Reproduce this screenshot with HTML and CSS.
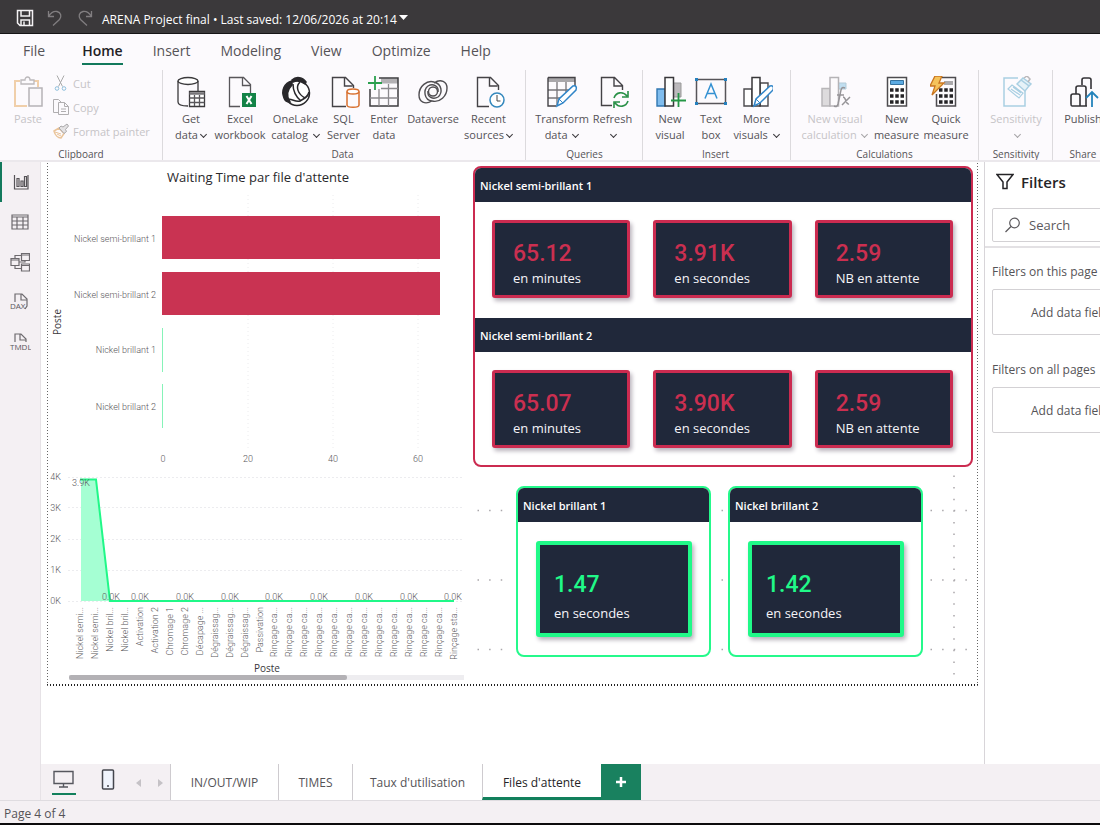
FILE: index.html
```html
<!DOCTYPE html>
<html lang="en">
<head>
<meta charset="utf-8">
<title>ARENA Project final</title>
<link rel="stylesheet" href="styles.css">
</head>
<body>
<header class="titlebar">
  <button class="tb-btn" aria-label="Save"><svg width="18" height="18" viewBox="0 0 18 18" fill="none" stroke="#f4f2f4" stroke-width="1.500"><path d="M1.500 1.500H16.500V16.500H4L1.500 14z"/><path d="M5 2v5h8.500V2M5 16.500v-5.500h8.500v5.500M8 12.500v3.500"/></svg></button>
  <button class="tb-btn" aria-label="Undo"><svg width="18" height="18" viewBox="0 0 18 18" fill="none" stroke="#817e80" stroke-width="1.300"><path d="M2.500 2v5.500H8M2.500 7.500C5 3.500 8 2 11 2.500c4 1 5 5 2.500 8L7 16.500"/></svg></button>
  <button class="tb-btn" aria-label="Redo"><svg width="18" height="18" viewBox="0 0 18 18" fill="none" stroke="#817e80" stroke-width="1.300"><path d="M15.500 2v5.500H10M15.500 7.500C13 3.500 10 2 7 2.500c-4 1-5 5-2.500 8L11 16.500"/></svg></button>
  <h1 class="doc-name">ARENA Project final • Last saved: 12/06/2026 at 20:14</h1>
  <svg class="caret" width="9" height="5" viewBox="0 0 9 5"><path d="M0 0h9L4.500 5z" fill="#fff"/></svg>
</header>

<nav class="menu">
  <a href="#file">File</a><a href="#home" class="current">Home</a><a href="#insert">Insert</a><a href="#modeling">Modeling</a><a href="#view">View</a><a href="#optimize">Optimize</a><a href="#help">Help</a>
</nav>

<section class="ribbon" aria-label="Home ribbon">
  <div class="group clipboard">
    <div class="tools">
      <button class="paste" disabled>
        <svg width="32" height="32" viewBox="0 0 32 32" fill="none"><path d="M8 5H3v25h12M22 5h4v6" stroke="#f0cfaa" stroke-width="2"/><path d="M9 8V4h4c0-4 5-4 5 0h4v4z" stroke="#bcb9bc" stroke-width="1.300"/><path d="M17 12h13v18H17z" fill="#faf8fb" stroke="#b5b3b6" stroke-width="1.500"/></svg>
        <span>Paste</span>
      </button>
      <div class="small-tools">
        <button disabled><svg width="18" height="18" viewBox="0 0 18 18" fill="none" stroke="#aaa"><path d="M5 1.500l5.500 11M12 1.500L6.500 12.500"/><circle cx="5" cy="14.500" r="1.800" stroke="#8fc0dd"/><circle cx="12" cy="14.500" r="1.800" stroke="#8fc0dd"/></svg>Cut</button>
        <button disabled><svg width="18" height="18" viewBox="0 0 18 18" fill="none" stroke="#b0aeb0"><path d="M6 14.500H1.500v-13h5l3 3M6.500 16.500v-12h6l4 4v8zM12.500 4.500v4h4M9 11h5M9 13.500h5"/></svg>Copy</button>
        <button disabled><svg width="18" height="18" viewBox="0 0 18 18" fill="none"><path d="M2 9l5-3 5 5.500L9 16c-3 0-6-3-7-7z" stroke="#eac49a" stroke-width="1.500"/><path d="M3 10l6 2M5 12l4 2" stroke="#eac49a"/><path d="M7 6l2-2 2 1 4-3 1.500 2-3 3.500 1 2-2.500 2z" fill="#e4e2e4" stroke="#aaa8aa"/></svg>Format painter</button>
      </div>
    </div>
    <h2>Clipboard</h2>
  </div>

  <div class="group data">
    <div class="tools">
      <button class="tool w42"><svg width="32" height="32" viewBox="0 0 32 32" fill="none" stroke="#3b3a3c" stroke-width="1.300"><ellipse cx="13" cy="5" rx="10" ry="3.500" fill="#fff"/><path d="M3 5v21c0 3 5 4 10 4M23 5v10"/><path d="M14.500 15.500h15v15h-15z" fill="#fff"/><path d="M14.500 17.500h15" stroke="#777579" stroke-width="2.500"/><path d="M19.500 19v11M24.500 19v11M14.500 22h15M14.500 26.500h15" stroke="#59575b"/></svg><span>Get<br>data<i class="chev"></i></span></button>
      <button class="tool w56"><svg width="32" height="32" viewBox="0 0 32 32" fill="none"><path d="M16 30.500H5.500v-29h14l7 7V17M18.500 1.500v8h8" stroke="#58565a" stroke-width="1.300"/><path d="M18 17h14v14H18z" fill="#138347"/><path d="M22.500 20l5 8M27.500 20l-5 8" stroke="#fff" stroke-width="2"/></svg><span>Excel<br>workbook</span></button>
      <button class="tool w55"><svg width="32" height="32" viewBox="0 0 32 32" fill="none" stroke="#29282b" stroke-width="1.500"><circle cx="17" cy="17" r="12.500" fill="#fff"/><path d="M12 5C4 7 1 15 4 22c1 3 3 4 6 4-4-6-3-12 2-17z" fill="#29282b"/><path d="M12 4c4-4 11-3 14 2l-1 2c-4-3-8-4-12-2z" fill="#29282b"/><path d="M13 8c0 7 2 12 8 17M20 6c-5 5-2 12 5 16"/><path d="M6 24c5-3 9 3 14 1 4-2 8-4 9-9"/></svg><span>OneLake<br>catalog <i class="chev"></i></span></button>
      <button class="tool w41"><svg width="32" height="32" viewBox="0 0 32 32" fill="none"><path d="M18 30.500H4.500v-29h13l8 8V12M16.500 1.500v8.500h8" stroke="#444246" stroke-width="1.400"/><ellipse cx="25" cy="15.500" rx="6" ry="2.500" fill="#fff" stroke="#d8702f" stroke-width="1.400"/><path d="M19 15.500V29c0 3 12 3 12 0V15.500" stroke="#d8702f" stroke-width="1.500"/></svg><span>SQL<br>Server</span></button>
      <button class="tool w40"><svg width="32" height="32" viewBox="0 0 32 32" fill="none"><path d="M13 5h17" stroke="#b3b1b4" stroke-width="5"/><path d="M11 2h19v28H2V13" stroke="#3d3c3f" stroke-width="1.500"/><path d="M2 22h28M13 12.500h17M11 13v17M20.500 8v22" stroke="#8b898d" stroke-width="1.300"/><path d="M7 0v14M0 7h14" stroke="#2ba04e" stroke-width="1.800"/></svg><span>Enter<br>data</span></button>
      <button class="tool w58"><svg width="32" height="32" viewBox="0 0 32 32" fill="none" stroke="#504e52" stroke-width="1.400"><path d="M15 25C8 29 2 26 2 19 2 10 10 4 17 6c8 2 9 11 4 15-5 3-11 0-10-6M17 7c7-5 13-1 13 5 0 8-7 15-15 13-8-1-9-11-4-15 5-3 11 0 10 6"/><circle cx="16" cy="15.500" r="4.500"/></svg><span>Dataverse</span></button>
      <button class="tool w53"><svg width="32" height="32" viewBox="0 0 32 32" fill="none"><path d="M16 30.500H4.500v-29h13l8 8V14M16.500 1.500v8.500h8" stroke="#444246" stroke-width="1.400"/><circle cx="24" cy="24" r="7" fill="#fff" stroke="#3488bd" stroke-width="1.500"/><path d="M24 19v6h3.500" stroke="#444"/></svg><span>Recent<br>sources<i class="chev"></i></span></button>
    </div>
    <h2>Data</h2>
  </div>

  <div class="group queries">
    <div class="tools">
      <button class="tool w56"><svg width="32" height="32" viewBox="0 0 32 32" fill="none"><path d="M2 4h27" stroke="#a9a7aa" stroke-width="4"/><path d="M2 14h21M2 22h15M11 6v24M20 6v12" stroke="#777579" stroke-width="1.300"/><path d="M2 1.500h27V12M10 30H2V1.500" stroke="#444246" stroke-width="1.400"/><path d="M11 30l2-7 14-13c3-1 4 1 3 4L17 27z" fill="#fff" stroke="#3185c8" stroke-width="1.500"/><path d="M13 23l4 4" stroke="#3185c8"/></svg><span>Transform<br>data <i class="chev"></i></span></button>
      <button class="tool w45"><svg width="32" height="32" viewBox="0 0 32 32" fill="none"><path d="M15 29.500H4.500v-28h13l8 8V14M17 1.500V10h8" stroke="#444246" stroke-width="1.400"/><path d="M17 22c2-6 9-7 13-2M31 15v6h-6M31 25c-2 6-9 7-13 2M17 32v-6h6" stroke="#299047" stroke-width="1.600"/></svg><span>Refresh<br><i class="chev"></i></span></button>
    </div>
    <h2>Queries</h2>
  </div>

  <div class="group insert">
    <div class="tools">
      <button class="tool w40"><svg width="32" height="32" viewBox="0 0 32 32" fill="none"><path d="M3 13h8v17H3z" fill="#80bdee" stroke="#3177b1" stroke-width="1.400"/><path d="M19 7h8v14h-8z" fill="#bcb9bc" stroke="#999"/><path d="M11 1.500h8.500V30H11z" fill="#fff" stroke="#38373a" stroke-width="1.500"/><path d="M24.500 17v14M17 24.500h15" stroke="#259746" stroke-width="1.800"/></svg><span>New<br>visual</span></button>
      <button class="tool w42"><svg width="32" height="32" viewBox="0 0 32 32" fill="none"><path d="M1.500 3.500h29v24h-29z" stroke="#57555a" stroke-width="1.500"/><path d="M0 2h3v3H0zM29 2h3v3h-3zM0 26h3v3H0zM29 26h3v3h-3z" fill="#2580be"/><path d="M10 22.500L16 8l6 14.500M12 17.500h8" stroke="#3491d2" stroke-width="1.500"/></svg><span>Text<br>box</span></button>
      <button class="tool w49"><svg width="32" height="32" viewBox="0 0 32 32" fill="none"><path d="M3 13h8v17H3zM19 7h8v23h-8z" fill="#fff" stroke="#4b494d" stroke-width="1.400"/><path d="M11 1.500h8V30h-8z" fill="#fff" stroke="#38373a" stroke-width="1.500"/><path d="M13 30l2-7 14-13c3-1 4 1 3 4L19 27z" fill="#fff" stroke="#3185c8" stroke-width="1.500"/><path d="M15 23l4 4" stroke="#3185c8"/></svg><span>More<br>visuals <i class="chev"></i></span></button>
    </div>
    <h2>Insert</h2>
  </div>

  <div class="group calculations">
    <div class="tools">
      <button class="tool w74" disabled><svg width="32" height="32" viewBox="0 0 32 32" fill="none"><path d="M3 12.500h8V30H3z" fill="#dddbdd" stroke="#b8b6b9" stroke-width="1.500"/><path d="M19 7h8v6h-8z" fill="#c0def0" stroke="#b3cbd8"/><path d="M11 1.500h8.500V30H11z" fill="#fcfafc" stroke="#b5b3b6" stroke-width="1.500"/><path d="M26 12c-4-2-4 2-5 7l-2 9c-1 3-2 3-4 2M18 19h7M24 21c3 0 3 8 6 7M31 21l-8 8" stroke="#969498" stroke-width="1.500"/></svg><span>New visual<br>calculation <i class="chev"></i></span></button>
      <button class="tool w49"><svg width="32" height="32" viewBox="0 0 32 32" fill="none"><path d="M6.500 1.500h19V30h-19z" fill="#fff" stroke="#4d4b4f" stroke-width="1.500"/><path d="M9.500 4.500h13v4h-13z" fill="#5babe3" stroke="#3573a0"/><path d="M9 14h14M9 20h14M9 26h14" stroke="#242326" stroke-width="3.500" stroke-dasharray="3.500 1.750"/></svg><span>New<br>measure</span></button>
      <button class="tool w50"><svg width="32" height="32" viewBox="0 0 32 32" fill="none"><path d="M12 1.500h13.500V30h-19V18" stroke="#4d4b4f" stroke-width="1.500"/><path d="M14 5h9v4h-9z" fill="#aaa8ab"/><path d="M9 14h14M9 20h14M9 26h14" stroke="#242326" stroke-width="3.500" stroke-dasharray="3.500 1.750"/><path d="M5 0h7l-3 7h5L2 19l3-9H0z" fill="#f5c35b" stroke="#c97520" stroke-width="1.300"/></svg><span>Quick<br>measure</span></button>
    </div>
    <h2>Calculations</h2>
  </div>

  <div class="group sensitivity">
    <div class="tools">
      <button class="tool w56" disabled><svg width="32" height="32" viewBox="0 0 32 32" fill="none" stroke="#a9cfe2" stroke-width="1.500"><path d="M18 2H4v28h21V15"/><path d="M8 13l4-4 11 8-4 5zM11 13l9 6M13 11l8 6" stroke-width="1.200"/><path d="M17 8l4-4 8 6-4 5zM21 4l2-2 8 6-2 2" fill="#e6f2f8"/><path d="M24 2l3-2 3 3-2 3" stroke="#b9b7ba"/></svg><span>Sensitivity<br><i class="chev"></i></span></button>
    </div>
    <h2>Sensitivity</h2>
  </div>

  <div class="group share">
    <div class="tools">
      <button class="tool w42"><svg width="32" height="32" viewBox="0 0 32 32" fill="none"><path d="M20 30H5c-1 0-1-1-1-2v-8c0-2 1-2 2-2h5c2 0 2 1 2 2v10M9 18v-6c0-2 1-2 2-2h6c2 0 2 1 2 2v18M15 9V4c0-2 1-2 2-2h5c2 0 2 1 2 2v9" stroke="#343337" stroke-width="1.600"/><path d="M25 31V17M19 22l6-6 6 6" stroke="#2382bb" stroke-width="1.800"/></svg><span>Publish</span></button>
    </div>
    <h2>Share</h2>
  </div>
</section>

<div class="workspace">
  <nav class="rail" aria-label="Views">
    <button class="active" aria-label="Report view"><svg width="18" height="18" viewBox="0 0 18 18" fill="none" stroke="#565357" stroke-width="1.200"><path d="M2.500 2v14H16V2M5 5.500h2v8H5zM9 8h2v5.500H9zM12.500 3.500h2v10h-2z"/></svg></button>
    <button aria-label="Table view"><svg width="18" height="18" viewBox="0 0 18 18" fill="none" stroke="#6d6a6e" stroke-width="1.200"><path d="M1 2h16v14H1zM1 4h16M1 8h16M1 12h16M6 4v12M12 4v12"/></svg></button>
    <button aria-label="Model view"><svg width="20" height="20" viewBox="0 0 20 20" fill="none" stroke="#6d6a6e" stroke-width="1.200"><path d="M1 6.500h8v7H1zM1 8h8M11.500 1.500h8v7h-8zM11.500 3h8M11.500 12h8v7h-8zM11.500 13.500h8M5 6V3.500h6M5 14v2.500h6M9 10h6V8"/></svg></button>
    <button aria-label="DAX query view"><svg width="22" height="18" viewBox="0 0 22 18" fill="none" stroke="#6d6a6e" stroke-width="1.200"><path d="M6 9V1h7l5 5v7l-2 3M12 1v6h6"/><text x="1" y="16" class="rail-text">DAX</text></svg></button>
    <button aria-label="TMDL view"><svg width="22" height="18" viewBox="0 0 22 18" fill="none" stroke="#6d6a6e" stroke-width="1.200"><path d="M6 9V1h6l5 5v3M11 1v6h6"/><text x="1" y="17" class="rail-text">TMDL</text></svg></button>
  </nav>

  <main class="canvas">
    <section class="report">
      <svg class="grid-dots" viewBox="47 163 931 523" aria-hidden="true">
        <g stroke="#aaa7ab" stroke-width="1.500">
          <path d="M477.500 510.500H503M477.500 580H503M477.500 649.500H503M721.500 510.500h2M721.500 580h2M721.500 649.500h2M930.500 510.500H968M930.500 580H968M930.500 649.500H968M954 475.500V675" stroke-dasharray="1.500 10.120"/>
        </g>
      </svg>
      <div class="charts">
        <svg class="chart" viewBox="47 163 426 305" role="img" aria-label="Waiting Time par file d'attente">
          <path d="M248 195V450M333 195V450M418 195V450" stroke="#ececee" stroke-dasharray="1 3"/>
          <text x="258" y="182" class="chart-title" text-anchor="middle">Waiting Time par file d'attente</text>
          <g fill="#c93352"><path d="M162 216h278v43H162zM162 272h278v43H162z"/></g>
          <path d="M162.500 328v44M162.500 384v44" stroke="#86f3b8"/>
          <g class="axis" text-anchor="end">
            <text x="156" y="242">Nickel semi-brillant 1</text><text x="156" y="298">Nickel semi-brillant 2</text><text x="156" y="353">Nickel brillant 1</text><text x="156" y="410">Nickel brillant 2</text>
          </g>
          <g class="axis" text-anchor="middle"><text x="163" y="462">0</text><text x="248" y="462">20</text><text x="333" y="462">40</text><text x="418" y="462">60</text></g>
          <text class="axis-title" text-anchor="middle" transform="translate(61 322) rotate(-90)">Poste</text>
        </svg>
        <svg class="chart" viewBox="47 468 426 216" role="img" aria-label="Waiting Time par Poste">
          <path d="M68 477.500H464M68 507.500H464M68 539.500H464M68 570.500H464M68 601.500H464" stroke="#ececef" stroke-dasharray="2 2"/>
          <path d="M81 480h15l14 121H81z" fill="#a5ffd3"/>
          <g class="axis" text-anchor="end"><text x="61" y="480">4K</text><text x="61" y="511">3K</text><text x="61" y="542">2K</text><text x="61" y="573">1K</text><text x="61" y="604">0K</text></g>
          <path d="M80 479.500h16L110 601H454" fill="none" stroke="#20f888" stroke-width="2"/>
          <g class="axis" text-anchor="middle"><text x="81" y="486">3.9K</text><text x="111" y="600">0.0K</text><text x="140" y="600">0.0K</text><text x="185" y="600">0.0K</text><text x="230" y="600">0.0K</text><text x="274" y="600">0.0K</text><text x="319" y="600">0.0K</text><text x="364" y="600">0.0K</text><text x="409" y="600">0.0K</text><text x="453" y="600">0.0K</text></g>
          <g class="axis" text-anchor="end" transform="translate(0 607) rotate(-90)">
            <text y="83">Nickel semi...</text><text y="98">Nickel semi...</text><text y="113">Nickel bril...</text><text y="128">Nickel bril...</text><text y="143">Activation</text><text y="158">Activation 2</text><text y="173">Chromage 1</text><text y="188">Chromage 2</text><text y="203">Décapage ...</text><text y="218">Dégraissag...</text><text y="233">Dégraissag...</text><text y="248">Dégraissag...</text><text y="263">Passivation</text><text y="277">Rinçage ca...</text><text y="292">Rinçage ca...</text><text y="307">Rinçage ca...</text><text y="322">Rinçage ca...</text><text y="337">Rinçage ca...</text><text y="352">Rinçage ca...</text><text y="367">Rinçage ca...</text><text y="382">Rinçage ca...</text><text y="397">Rinçage ca...</text><text y="412">Rinçage ca...</text><text y="427">Rinçage ca...</text><text y="442">Rinçage ca...</text><text y="457">Rinçage sta...</text>
          </g>
          <text x="267" y="672" class="axis-title" text-anchor="middle">Poste</text>
          <rect x="69" y="675" width="395" height="5" fill="#eeedf0"/><rect x="69" y="675" width="278" height="5" rx="2" fill="#b3b1b5"/>
        </svg>
      </div>
      <div class="panels">
        <div class="panel red">
          <h3>Nickel semi-brillant 1</h3>
          <div class="cards">
            <div class="card"><strong>65.12</strong><span>en minutes</span></div>
            <div class="card"><strong>3.91K</strong><span>en secondes</span></div>
            <div class="card"><strong>2.59</strong><span>NB en attente</span></div>
          </div>
          <h3>Nickel semi-brillant 2</h3>
          <div class="cards">
            <div class="card"><strong>65.07</strong><span>en minutes</span></div>
            <div class="card"><strong>3.90K</strong><span>en secondes</span></div>
            <div class="card"><strong>2.59</strong><span>NB en attente</span></div>
          </div>
        </div>
        <div class="green-row">
          <div class="panel green"><h3>Nickel brillant 1</h3><div class="cards"><div class="card"><strong>1.47</strong><span>en secondes</span></div></div></div>
          <div class="panel green"><h3>Nickel brillant 2</h3><div class="cards"><div class="card"><strong>1.42</strong><span>en secondes</span></div></div></div>
        </div>
      </div>
    </section>
  </main>

  <aside class="filters">
    <div class="filters-inner">
      <h2><svg width="18" height="17" viewBox="0 0 18 17" fill="none" stroke="#252427" stroke-width="1.500"><path d="M1 1.500h16L11 9v6.500H7V9z"/></svg>Filters</h2>
      <label class="search"><svg width="17" height="17" viewBox="0 0 17 17" fill="none" stroke="#5b595d" stroke-width="1.200"><circle cx="10.500" cy="6" r="4.800"/><path d="M7 9.500L1.500 15"/></svg><input type="text" placeholder="Search" aria-label="Search filters"></label>
      <div class="filter-body">
        <h3>Filters on this page</h3><div class="drop">Add data fields here</div>
        <h3>Filters on all pages</h3><div class="drop">Add data fields here</div>
      </div>
    </div>
  </aside>

  <nav class="pages" aria-label="Pages">
    <div class="layouts">
      <button class="on" aria-label="Desktop layout"><svg width="22" height="20" viewBox="0 0 22 20" fill="none" stroke="#56575e" stroke-width="1.400"><path d="M1 2.500h19v12H1zM10.500 14.500V18M6 18h9"/></svg></button>
      <button aria-label="Mobile layout"><svg width="14" height="21" viewBox="0 0 14 21" fill="none" stroke="#44464d" stroke-width="1.500"><rect x="1.500" y="1" width="11" height="19" rx="1" fill="#f0f4fc"/><path d="M6 17h2"/></svg></button>
      <button class="arrow" aria-label="Previous page"><svg width="5" height="8" viewBox="0 0 5 8"><path d="M5 0v8L0 4z" fill="#c5c2c6"/></svg></button>
      <button class="arrow" aria-label="Next page"><svg width="5" height="8" viewBox="0 0 5 8"><path d="M0 0v8l5-4z" fill="#c5c2c6"/></svg></button>
    </div>
    <a href="#p1" class="w108">IN/OUT/WIP</a><a href="#p2" class="w74">TIMES</a><a href="#p3" class="w130">Taux d'utilisation</a><a href="#p4" class="w119 selected">Files d'attente</a>
    <button class="add" aria-label="New page"><svg width="12" height="12" viewBox="0 0 12 12"><path d="M6 1v10M1 6h10" stroke="#fff" stroke-width="2.500"/></svg></button>
  </nav>
</div>
<footer class="status">Page 4 of 4</footer>
</body>
</html>
```
FILE: styles.css
```css
* { box-sizing: border-box; }
body {
  margin: 0;
  min-height: 100vh;
  display: flex;
  flex-direction: column;
  overflow-x: hidden;
  background: #fff;
  color: #555357;
  font-family: "Open Sans", "Noto Sans", sans-serif;
  font-size: 12px;
}
h1, h2, h3 { margin: 0; font-weight: 400; }
button { border: 0; padding: 0; background: none; font: inherit; color: inherit; }
a { color: inherit; text-decoration: none; }
svg { flex: none; }

.titlebar {
  height: 34px;
  display: flex;
  align-items: center;
  padding: 2px 16px 0;
  background: #3b393b;
  border-bottom: 1px solid #161516;
  color: #fff;
}
.tb-btn { width: 30px; height: 18px; text-align: left; }
.tb-btn svg { display: block; }
.doc-name { margin-top: 4px; margin-left: -4px; font-size: 12px; }
.caret { margin-left: 2px; }

.menu {
  height: 34px;
  display: flex;
  gap: 28px;
  padding: 0 22px;
  background: #fcfafd;
  font-size: 14px;
  line-height: 33px;
}
.menu a { padding: 0 1px; height: 31px; }
.menu .current { padding: 0; margin: 0 1px 0 8px; font-weight: 600; color: #222124; border-bottom: 2px solid #12795c; }

.ribbon {
  height: 94px;
  display: flex;
  overflow: hidden;
  background: #fcfafd;
  border-bottom: 2px solid #ebe8ec;
  font-size: 11px;
}
.group {
  flex: none;
  display: flex;
  flex-direction: column;
  justify-content: space-between;
  margin-top: 2px;
  padding: 6px 7px 0;
  border-right: 1px solid #dcdadd;
}
.group h2 { text-align: center; font-size: 10px; line-height: 12px; }
.tools { display: flex; }
.clipboard { width: 163px; padding: 6px 0 0; }
.clipboard .tools { padding-left: 12px; }
.data { padding: 6px 10px 0 7px; }
.queries { padding: 6px 7px 0 8px; }
.insert { padding: 6px 9px 0 7px; }
.calculations { padding: 6px 7px 0 7px; }
.sensitivity { padding: 6px 8px 0 9px; }
.share { flex: 1 0 62px; padding: 6px 11px 0 9px; border: 0; }
.tool, .paste {
  display: flex;
  flex-direction: column;
  align-items: center;
  gap: 3px;
  line-height: 16px;
  white-space: nowrap;
}
.tool span { display: block; text-align: center; }
button:disabled { color: #c6c4c7; }
.paste { width: 32px; }
.small-tools { display: flex; flex-direction: column; gap: 6px; padding-left: 8px; margin-top: -2px; }
.small-tools button { display: flex; align-items: center; gap: 3px; height: 18px; white-space: nowrap; }
.chev {
  display: inline-block;
  width: 5px;
  height: 5px;
  margin: 0 1px 2px 3px;
  border: solid #39373b;
  border-width: 0 1px 1px 0;
  transform: rotate(45deg);
}
button:disabled .chev { border-color: #a5a3a6; }
.w40 { width: 40px; } .w41 { width: 41px; } .w42 { width: 42px; } .w45 { width: 45px; }
.w49 { width: 49px; } .w50 { width: 50px; } .w53 { width: 53px; } .w55 { width: 55px; }
.w56 { width: 56px; } .w58 { width: 58px; } .w74 { width: 74px; }

.workspace {
  flex: 1;
  display: grid;
  grid-template-columns: 41px minmax(0, 1fr) 116px;
  grid-template-rows: 1fr 36px;
}
.rail { grid-row: 1 / 3; background: #f4f0f3; border-right: 1px solid #e6e2e6; }
.rail button { display: grid; place-items: center; width: 100%; height: 40px; }
.rail .active { border-left: 2px solid #12795c; }
.rail-text { font-size: 8px; fill: #5a575b; stroke: none; }

.canvas { padding: 1px 6px 0; }
.report {
  position: relative;
  display: grid;
  grid-template-columns: 426fr 505fr;
  background:
    repeating-linear-gradient(#666 0 1px, transparent 1px 3px) 0 0 / 1px 100% no-repeat,
    repeating-linear-gradient(#666 0 1px, transparent 1px 3px) 100% 0 / 1px 100% no-repeat,
    repeating-linear-gradient(90deg, #222 0 1px, transparent 1px 3px) 0 100% / 100% 2px no-repeat;
  padding-bottom: 2px;
}
.grid-dots { position: absolute; inset: 0; width: 100%; }
.charts, .panels { position: relative; }
.chart { display: block; width: 100%; }
.axis { font-family: Roboto, "Open Sans", sans-serif; font-size: 9px; font-weight: 300; fill: #59575b; }
.chart-title { font-size: 13px; fill: #29282b; }
.axis-title { font-size: 10px; fill: #39373b; }

.panels { padding: 3px 5px 0 0; }
.panel { border: 2px solid #cb2b50; border-radius: 8px; background: #fff; overflow: hidden; }
.panel h3 {
  padding-left: 5px;
  height: 34px;
  line-height: 35px;
  background: #20283a;
  color: #fff;
  font-size: 11px;
  font-weight: 600;
}
.cards { display: flex; gap: 23px; padding: 18px 18px 20px 17px; }
.red .cards:last-child { padding-bottom: 17px; }
.card {
  flex: 1;
  display: flex;
  flex-direction: column;
  justify-content: center;
  height: 78px;
  padding: 10px 0 0 18px;
  background: #20283a;
  border: 3px solid #cb2b50;
  border-radius: 3px;
  box-shadow: 2px 3px 4px #b9b3bc;
  color: #f5f4f8;
  white-space: nowrap;
}
.card strong { color: #cb2f50; font-family: Roboto, "Open Sans", sans-serif; font-size: 23px; font-weight: 500; line-height: 28px; }
.card span { font-size: 13px; line-height: 20px; }
.green-row { display: flex; gap: 17px; margin-top: 19px; padding: 0 50px 0 43px; }
.green { flex: 1; border-color: #25f98b; }
.green .cards { padding: 19px 17px 18px 18px; }
.green .card { height: 96px; border: 4px solid #20f988; padding-left: 14px; padding-top: 16px; }
.green .card strong { color: #20f988; line-height: 32px; }
.green .card span { line-height: 24px; }

.filters { border-left: 1px solid #d8d5d9; overflow: hidden; }
.filters-inner { min-width: 230px; }
.filters h2 {
  display: flex;
  align-items: center;
  gap: 7px;
  height: 39px;
  padding-left: 11px;
  color: #252427;
  font-size: 15px;
  font-weight: 600;
}
.search {
  display: flex;
  align-items: center;
  gap: 8px;
  height: 34px;
  margin: 7px 7px 4px;
  padding-left: 11px;
  border: 1px solid #d3d1d4;
  border-radius: 2px;
}
.search input { border: 0; padding: 0; outline: 0; background: none; font: inherit; font-size: 13px; color: #5b595d; }
.search input::placeholder { color: #5b595d; opacity: 1; }
.filter-body { border-top: 2px solid #e3e1e4; padding: 15px 7px 0; }
.filters h3 { font-size: 12px; line-height: 18px; }
.drop {
  height: 46px;
  margin: 8px 0 26px;
  padding-left: 38px;
  border: 1px solid #d3d1d4;
  border-radius: 2px;
  line-height: 45px;
}

.pages { grid-column: 2 / 4; display: flex; background: #f4f0f3; }
.layouts { width: 129px; display: flex; padding-left: 11px; }
.layouts button { width: 24px; height: 31px; }
.layouts .on { border-bottom: 2px solid #12805c; margin-right: 20px; }
.layouts .arrow { width: 5px; margin: 2px 0 0 16px; }
.layouts svg { vertical-align: middle; }
.layouts .arrow + .arrow { margin-left: 17px; }
.pages a { background: #fff; border-left: 1px solid #cecbcf; text-align: center; line-height: 37px; }
.pages .selected { color: #252427; border-bottom: 3px solid #12805c; }
.w108 { width: 108px; } .w119 { width: 119px; } .w130 { width: 130px; }
.add { width: 40px; background: #19815f; display: grid; place-items: center; }

.status {
  height: 25px;
  padding-left: 4px;
  background: #f4f0f3;
  border-top: 1px solid #dfdce0;
  border-bottom: 2px solid #0c0b0c;
  line-height: 26px;
}
```
